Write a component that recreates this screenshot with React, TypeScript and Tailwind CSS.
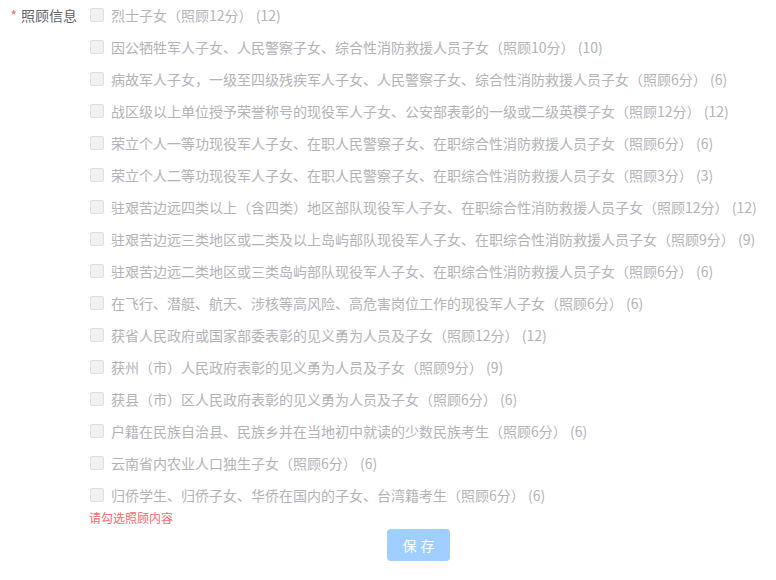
import React from 'react';

const items: { text: string; score: number }[] = [
  { text: '烈士子女（照顾12分）', score: 12 },
  { text: '因公牺牲军人子女、人民警察子女、综合性消防救援人员子女（照顾10分）', score: 10 },
  { text: '病故军人子女，一级至四级残疾军人子女、人民警察子女、综合性消防救援人员子女（照顾6分）', score: 6 },
  { text: '战区级以上单位授予荣誉称号的现役军人子女、公安部表彰的一级或二级英模子女（照顾12分）', score: 12 },
  { text: '荣立个人一等功现役军人子女、在职人民警察子女、在职综合性消防救援人员子女（照顾6分）', score: 6 },
  { text: '荣立个人二等功现役军人子女、在职人民警察子女、在职综合性消防救援人员子女（照顾3分）', score: 3 },
  { text: '驻艰苦边远四类以上（含四类）地区部队现役军人子女、在职综合性消防救援人员子女（照顾12分）', score: 12 },
  { text: '驻艰苦边远三类地区或二类及以上岛屿部队现役军人子女、在职综合性消防救援人员子女（照顾9分）', score: 9 },
  { text: '驻艰苦边远二类地区或三类岛屿部队现役军人子女、在职综合性消防救援人员子女（照顾6分）', score: 6 },
  { text: '在飞行、潜艇、航天、涉核等高风险、高危害岗位工作的现役军人子女（照顾6分）', score: 6 },
  { text: '获省人民政府或国家部委表彰的见义勇为人员及子女（照顾12分）', score: 12 },
  { text: '获州（市）人民政府表彰的见义勇为人员及子女（照顾9分）', score: 9 },
  { text: '获县（市）区人民政府表彰的见义勇为人员及子女（照顾6分）', score: 6 },
  { text: '户籍在民族自治县、民族乡并在当地初中就读的少数民族考生（照顾6分）', score: 6 },
  { text: '云南省内农业人口独生子女（照顾6分）', score: 6 },
  { text: '归侨学生、归侨子女、华侨在国内的子女、台湾籍考生（照顾6分）', score: 6 },
];

export default function App() {
  return (
    <div
      className="w-[776px] h-[580px] bg-white overflow-hidden"
      style={{ fontFamily: '"Microsoft YaHei", "Noto Sans CJK SC", "Liberation Sans", sans-serif' }}
    >
      <div className="flex -mt-px">
        <div className="w-[90px] shrink-0 h-8 flex items-center justify-end pr-[13px] text-[14px] text-[#606266]">
          <span className="text-[#f56c6c] mr-1">*</span>
          <span>照顾信息</span>
        </div>
        <div className="flex flex-col">
          {items.map((it, i) => (
            <label key={i} className="h-8 flex items-center cursor-not-allowed">
              <span className="w-[14px] h-[14px] shrink-0 rounded-[2px] border border-[#dcdfe6] bg-[#f0f1f3]" />
              <span className="ml-[7px] text-[14px] text-[#b1b3b8] whitespace-nowrap">
                {it.text} ({it.score})
              </span>
            </label>
          ))}
          <div className="text-[12px] leading-[14px] text-[#f56c6c] -ml-px">请勾选照顾内容</div>
          <div className="mt-1 pl-[297px]">
            <button
              disabled
              className="w-[63px] h-8 rounded-[4px] bg-[#a0cfff] text-white text-[14px] tracking-[4px] pl-1"
            >
              保存
            </button>
          </div>
        </div>
      </div>
    </div>
  );
}
